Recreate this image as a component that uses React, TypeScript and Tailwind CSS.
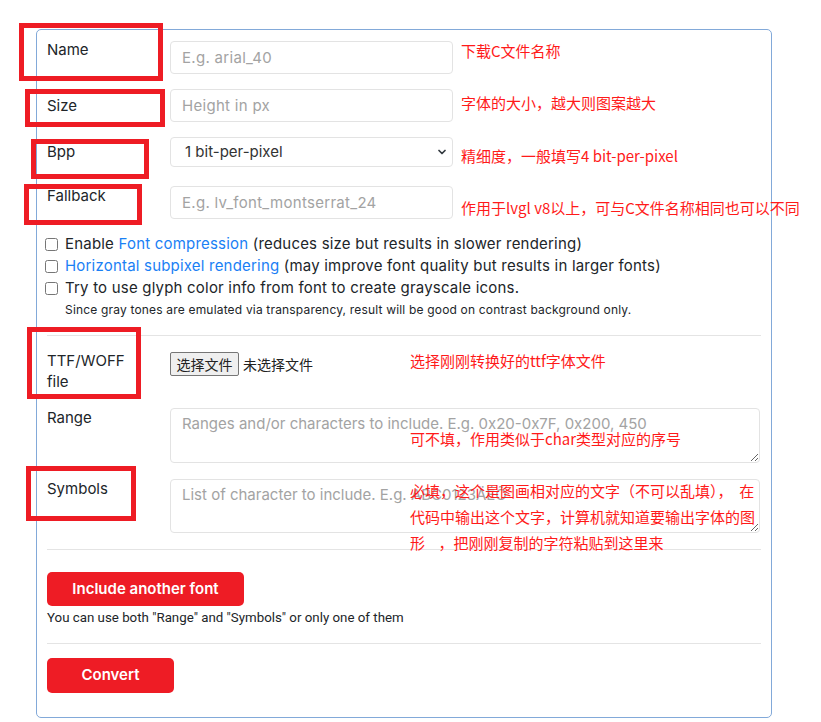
import { ChevronDown } from "lucide-react"

const labelCls = "w-[123px] shrink-0 text-[15px] leading-[22px] text-[#212529]"
const inputCls =
  "h-[33px] w-[283px] rounded-[4px] border border-[#e3e3e3] px-[11px] text-[15px] tracking-[0.3px] text-[#333] outline-none placeholder:text-[#a3a3a3]"
const areaCls =
  "w-[590px] rounded-[4px] border border-[#e3e3e3] px-[11px] pt-[4px] text-[15px] text-[#333] outline-none placeholder:text-[#a3a3a3]"
const note = "absolute font-['Noto_Sans_CJK_SC',sans-serif] text-[15px] leading-[22px] text-[#ff1a1a] whitespace-nowrap"
const box = "absolute border-[5px] border-[#ee1c24]"

function Check({ children }: { children: React.ReactNode }) {
  return (
    <label className="flex h-[22px] items-center text-[15px] leading-[22px] tracking-[0.2px] text-[#212529]">
      <input type="checkbox" className="m-0 -ml-[2px] mr-[7px] h-[13px] w-[13px]" />
      <span>{children}</span>
    </label>
  )
}

export default function App() {
  return (
    <div className="relative h-[722px] w-[821px] overflow-hidden bg-white font-['Inter','Noto_Sans_CJK_SC',sans-serif]">
      <div className="ml-[36px] mt-[29px] h-[689px] w-[736px] rounded-[5px] border border-[#82a9d9] px-[10px] pt-[11px]">
        {/* Name */}
        <div className="flex h-[33px] items-start">
          <div className={`${labelCls} -mt-[2px]`}>Name</div>
          <input className={inputCls} placeholder="E.g. arial_40" />
        </div>
        {/* Size */}
        <div className="mt-[15px] flex h-[33px] items-center">
          <div className={labelCls}>Size</div>
          <input className={inputCls} placeholder="Height in px" />
        </div>
        {/* Bpp */}
        <div className="mt-[15px] flex h-[30px] items-center">
          <div className={labelCls}>Bpp</div>
          <div className="relative">
            <select className="h-[30px] w-[283px] appearance-none rounded-[4px] border border-[#e3e3e3] bg-white pl-[14px] pr-[11px] text-[15px] text-[#333] outline-none">
              <option>1 bit-per-pixel</option>
              <option>2 bit-per-pixel</option>
              <option>4 bit-per-pixel</option>
              <option>8 bit-per-pixel</option>
            </select>
            <ChevronDown className="pointer-events-none absolute right-[5px] top-[9px] h-[12px] w-[12px] text-[#343a40]" strokeWidth={3.5} />
          </div>
        </div>
        {/* Fallback */}
        <div className="mt-[19px] flex h-[33px] items-start">
          <div className={`${labelCls} -mt-[1px]`}>Fallback</div>
          <input className={inputCls} placeholder="E.g. lv_font_montserrat_24" />
        </div>

        <div className="mt-[14px]">
          <Check>
            Enable <span className="text-[#1a80f5]">Font compression</span> (reduces size but results in slower rendering)
          </Check>
          <Check>
            <span className="text-[#1a80f5]">Horizontal subpixel rendering</span> (may improve font quality but results in larger fonts)
          </Check>
          <Check>Try to use glyph color info from font to create grayscale icons.</Check>
          <div className="mt-[2px] pl-[18px] text-[12px] leading-[18px] tracking-[0.18px] text-[#212529]">
            Since gray tones are emulated via transparency, result will be good on contrast background only.
          </div>
        </div>

        <hr className="mt-[16px] border-[#e4e4e4]" />

        {/* TTF */}
        <div className="mt-[14px] flex items-start">
          <div className="w-[123px] shrink-0 text-[15px] leading-[21px] text-[#212529]">
            TTF/WOFF
            <br />
            file
          </div>
          <div className="mt-[2px] flex items-center font-['Noto_Sans_CJK_SC',sans-serif] text-[14px] text-[#222]">
            <span className="flex h-[24px] w-[69px] items-center justify-center rounded-[2px] border border-[#767676] bg-[#efefef]">
              选择文件
            </span>
            <span className="ml-[4px]">未选择文件</span>
          </div>
        </div>
        {/* Range */}
        <div className="mt-[16px] flex items-start">
          <div className={`${labelCls} -mt-[1px]`}>Range</div>
          <textarea
            className={`${areaCls} h-[55px]`}
            placeholder="Ranges and/or characters to include. E.g. 0x20-0x7F, 0x200, 450"
          />
        </div>
        {/* Symbols */}
        <div className="mt-[16px] flex items-start">
          <div className={`${labelCls} -mt-[1px]`}>Symbols</div>
          <textarea className={`${areaCls} h-[54px]`} placeholder="List of character to include. E.g. ABC0123ÄÉÕ" />
        </div>

        <hr className="mt-[16px] border-[#e4e4e4]" />

        <button className="mt-[22px] h-[34px] w-[197px] rounded-[5px] bg-[#ee1c25] text-[15px] font-semibold text-white">
          Include another font
        </button>
        <div className="mt-[4px] font-['Roboto',sans-serif] text-[13.3px] leading-[16px] text-[#212529]">
          You can use both "Range" and "Symbols" or only one of them
        </div>

        <hr className="mt-[17px] border-[#e4e4e4]" />

        <button className="mt-[14px] h-[35px] w-[127px] rounded-[5px] bg-[#ee1c25] text-[15px] font-semibold text-white">
          Convert
        </button>
      </div>

      {/* annotations */}
      <div className={`${box} left-[19px] top-[23px] h-[58px] w-[144px]`} />
      <div className={`${box} left-[25px] top-[89px] h-[38px] w-[140px]`} />
      <div className={`${box} left-[31px] top-[139px] h-[40px] w-[118px]`} />
      <div className={`${box} left-[24px] top-[184px] h-[41px] w-[118px]`} />
      <div className={`${box} left-[27px] top-[327px] h-[72px] w-[114px]`} />
      <div className={`${box} left-[26px] top-[466px] h-[55px] w-[110px]`} />

      <div className={`${note} left-[461px] top-[40px]`}>下载C文件名称</div>
      <div className={`${note} left-[461px] top-[92px]`}>字体的大小，越大则图案越大</div>
      <div className={`${note} left-[461px] top-[145px]`}>精细度，一般填写4 bit-per-pixel</div>
      <div className={`${note} left-[461px] top-[197px]`}>作用于lvgl v8以上，可与C文件名称相同也可以不同</div>
      <div className={`${note} left-[410px] top-[350px]`}>选择刚刚转换好的ttf字体文件</div>
      <div className={`${note} left-[410px] top-[428px]`}>可不填，作用类似于char类型对应的序号</div>
      <div className={`${note} left-[410px] top-[478px] leading-[26px] whitespace-pre`}>
        {"必填，这个是图画相对应的文字（不可以乱填），  在\n代码中输出这个文字，计算机就知道要输出字体的图\n形    ，把刚刚复制的字符粘贴到这里来"}
      </div>
    </div>
  )
}
